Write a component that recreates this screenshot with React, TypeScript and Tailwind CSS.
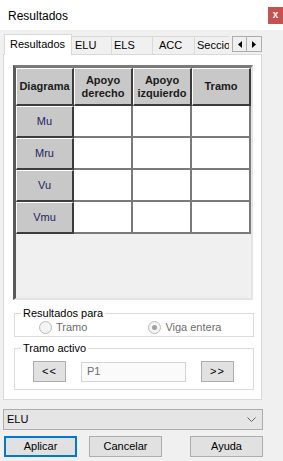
import React from 'react';

/* Dialogo "Resultados" (estilo ventana Windows) */

const cols = ['Apoyo derecho', 'Apoyo izquierdo', 'Tramo'];
const rows = ['Mu', 'Mru', 'Vu', 'Vmu'];

const raised =
  'bg-[#c8c8c8] border-t border-l border-t-white border-l-white border-r-2 border-b-2 border-r-[#3c3c3c] border-b-[#3c3c3c] flex items-center justify-center text-center';

function Tabs() {
  return (
    <div className="flex h-[24px] items-end">
      <div className="relative z-10 -mb-px flex h-[25px] w-[229px] items-end overflow-hidden pl-[4px]">
        <div className="flex h-[21px] w-[68px] shrink-0 items-center border border-b-0 border-[#d9d9d9] bg-white pl-[5px] pb-[2px] text-[11px]">
          Resultados
        </div>
        {[
          { t: 'ELU', w: 'w-[40px]', p: 'pl-[3px]' },
          { t: 'ELS', w: 'w-[41px]', p: 'pl-[2px]' },
          { t: 'ACC', w: 'w-[42px]', p: 'pl-[6px]' },
          { t: 'Secciones', w: 'w-[60px]', p: 'pl-[2px]' },
        ].map((tab) => (
          <div
            key={tab.t}
            className={`mb-px flex h-[18px] shrink-0 items-center border-t border-r border-[#d9d9d9] bg-[#f0f0f0] text-[11px] ${tab.w} ${tab.p}`}
          >
            {tab.t}
          </div>
        ))}
      </div>
      <div className="mb-[2px] ml-[3px] flex h-[16px] self-end">
        <div className="flex w-[15px] items-center justify-center border border-[#adadad] bg-[#f0f0f0]">
          <svg width="4" height="7" viewBox="0 0 4 7">
            <path d="M4 0 L0 3.5 L4 7 Z" fill="#000" />
          </svg>
        </div>
        <div className="flex w-[15px] items-center justify-center border border-l-0 border-[#adadad] bg-[#f0f0f0]">
          <svg width="4" height="7" viewBox="0 0 4 7">
            <path d="M0 0 L4 3.5 L0 7 Z" fill="#000" />
          </svg>
        </div>
      </div>
    </div>
  );
}

function Grid() {
  return (
    <div className="ml-[9px] mt-[10px] h-[235px] w-[240px] border-t-[3px] border-l-[3px] border-r-2 border-b-2 border-t-[#7a7a7a] border-l-[#5a5a5a] border-r-[#e4e4e4] border-b-[#e4e4e4] bg-[#f0f0f0]">
      <div className="grid grid-cols-[58px_59px_59px_59px] grid-rows-[38px_32px_32px_32px_32px]">
        <div className={`${raised} text-[11px] font-bold text-[#1a1a1a]`}>Diagrama</div>
        {cols.map((c) => (
          <div key={c} className={`${raised} px-[2px] text-[11px] font-bold leading-[13px] text-[#1a1a1a]`}>
            {c === 'Tramo' ? c : (
              <span>
                {c.split(' ')[0]}
                <br />
                {c.split(' ')[1]}
              </span>
            )}
          </div>
        ))}
        {rows.map((r) => (
          <React.Fragment key={r}>
            <div className={`${raised} text-[11px] text-[#24245e]`}>{r}</div>
            {cols.map((c) => (
              <div key={c} className="border-r-2 border-b-2 border-[#7a7a7a] bg-white" />
            ))}
          </React.Fragment>
        ))}
      </div>
    </div>
  );
}

function Radio({ checked, label }: { checked?: boolean; label: string }) {
  return (
    <div className="flex items-center gap-[4px] text-[11px] text-[#6d6d6d]">
      <span className="flex h-[13px] w-[13px] items-center justify-center rounded-full border border-[#bcbcbc] bg-[#f4f4f4]">
        {checked && <span className="h-[5px] w-[5px] rounded-full bg-[#a0a0a0]" />}
      </span>
      {label}
    </div>
  );
}

function SmallButton({ label }: { label: string }) {
  return (
    <div className="flex h-[21px] w-[33px] items-center justify-center border border-[#adadad] bg-[#e1e1e1] text-[11px] tracking-[1px]">
      {label}
    </div>
  );
}

export default function App() {
  return (
    <div className="flex h-[461px] w-[283px] flex-col overflow-hidden bg-[#f0f0f0] font-['Liberation_Sans',Arial,sans-serif] text-black">
      {/* Barra de título */}
      <div className="flex h-[30px] shrink-0 items-start justify-between bg-white">
        <span className="mt-[7px] ml-[8px] text-[12px]">Resultados</span>
        <div className="mt-[7px] flex h-[17px] w-[15px] items-center justify-center bg-[#c75050] pb-[2px] text-[10px] font-bold text-white">
          x
        </div>
      </div>

      <Tabs />

      {/* Panel de la pestaña */}
      <div className="ml-[3px] flex h-[346px] w-[259px] flex-col border border-[#d9d9d9] bg-white">
        <Grid />

        <fieldset className="ml-[10px] mt-[6px] w-[240px] border border-[#dcdcdc] pb-[2px]">
          <legend className="ml-[6px] px-[2px] text-[11px] leading-[14px]">Resultados para</legend>
          <div className="flex h-[14px] items-center pl-[24px]">
            <Radio label="Tramo" />
            <div className="ml-[61px]">
              <Radio checked label="Viga entera" />
            </div>
          </div>
        </fieldset>

        <fieldset className="ml-[10px] mt-[4px] w-[240px] border border-[#dcdcdc] pb-[7px]">
          <legend className="ml-[6px] px-[2px] text-[11px] leading-[14px]">Tramo activo</legend>
          <div className="mt-[6px] flex items-center pl-[18px]">
            <SmallButton label="<<" />
            <div className="ml-[15px] flex h-[20px] w-[105px] items-center border border-[#d4d4d4] bg-[#fafafa] pl-[5px] text-[11px] text-[#6d6d6d]">
              P1
            </div>
            <div className="ml-[15px]">
              <SmallButton label=">>" />
            </div>
          </div>
        </fieldset>
      </div>

      {/* Combo inferior */}
      <div className="ml-[3px] mt-[9px] flex h-[21px] w-[260px] items-center justify-between border border-[#adadad] bg-[#e5e5e5] pl-[3px] pr-[6px] text-[11px]">
        <span>ELU</span>
        <svg width="9" height="5" viewBox="0 0 9 5">
          <path d="M0.5 0.5 L4.5 4.5 L8.5 0.5" fill="none" stroke="#606060" strokeWidth="1" />
        </svg>
      </div>

      {/* Botones */}
      <div className="ml-[4px] mt-[6px] flex text-[11px]">
        <div className="flex h-[21px] w-[73px] items-center justify-center border-2 border-[#0078d7] bg-[#e1e1e1]">
          Aplicar
        </div>
        <div className="ml-[12px] flex h-[21px] w-[73px] items-center justify-center border border-[#adadad] bg-[#e1e1e1]">
          Cancelar
        </div>
        <div className="ml-[28px] flex h-[21px] w-[73px] items-center justify-center border border-[#adadad] bg-[#e1e1e1]">
          Ayuda
        </div>
      </div>
    </div>
  );
}
